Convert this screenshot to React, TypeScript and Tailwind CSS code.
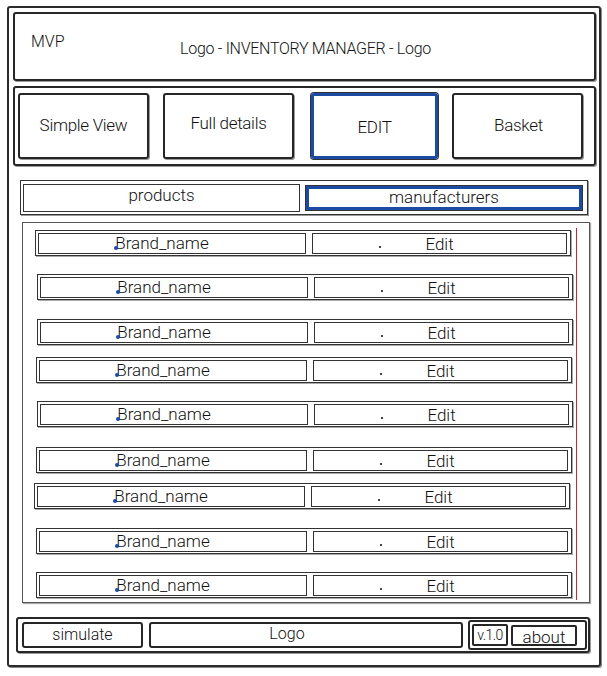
import React from 'react';

const font = { fontFamily: 'Roboto, "Open Sans", sans-serif' };

// row offsets inside the list box, uneven like the sketch
const rows = [
  { mt: 'mt-[7px]', ml: 'ml-[12px]' },
  { mt: 'mt-[18px]', ml: 'ml-[14px]' },
  { mt: 'mt-[19px]', ml: 'ml-[14px]' },
  { mt: 'mt-[12px]', ml: 'ml-[13px]' },
  { mt: 'mt-[18px]', ml: 'ml-[14px]' },
  { mt: 'mt-[20px]', ml: 'ml-[13px]' },
  { mt: 'mt-[10px]', ml: 'ml-[11px]' },
  { mt: 'mt-[19px]', ml: 'ml-[13px]' },
  { mt: 'mt-[18px]', ml: 'ml-[13px]' },
];

const NavButton: React.FC<{ label: string; active?: boolean; width: string; textClass?: string }> = ({ label, active, width, textClass }) => (
  <div
    className={
      'h-[66px] flex items-center justify-center rounded-[3px] ' +
      width +
      (active
        ? ' border-[3px] border-[#1d4aa3] shadow-[0_0_0_1px_#333]'
        : ' border-2 border-[#262626] shadow-[1px_1px_0_#9a9a9a]')
    }
  >
    <span className={'text-[17px] font-light text-[#111] tracking-[-0.3px] ' + (textClass ?? '')}>{label}</span>
  </div>
);

const BrandRow: React.FC<{ mt: string; ml: string }> = ({ mt, ml }) => (
  <div className={'flex w-[536px] h-[26px] items-center gap-[6px] border border-[#333] shadow-[1px_1px_0_#aaa] px-[2px] ' + mt + ' ' + ml}>
    <div className="relative w-[268px] h-[21px] border-[1.5px] border-[#333] flex items-center justify-center">
      <span className="relative text-[17px] font-light text-[#111] leading-none mr-[20px]">
        <span className="absolute left-[-1px] bottom-[2px] w-[4px] h-[4px] rounded-full bg-[#1d4aa3]" />
        Brand_name
      </span>
    </div>
    <div className="relative w-[255px] h-[21px] border-[1.5px] border-[#333] flex items-center justify-center">
      <span className="absolute left-[66px] top-[12px] w-[2px] h-[2px] bg-[#444]" />
      <span className="text-[17px] font-light text-[#111] leading-none pt-[3px]">Edit</span>
    </div>
  </div>
);

export default function App() {
  return (
    <div className="w-[607px] h-[676px] bg-white pt-[6px] pl-[7px]" style={font}>
      <div className="w-[594px] h-[661px] border-2 border-[#2b2b2b] rounded-[3px] p-[4px] shadow-[1px_1px_0_#888]">
        {/* Header */}
        <div className="relative w-[583px] h-[69px] border-2 border-[#262626] rounded-[3px] shadow-[1px_1px_0_#999]">
          <span className="absolute left-[16px] top-[16px] text-[16px] font-light text-[#111]">MVP</span>
          <div className="h-full flex items-center justify-center pt-[4px] pl-[2px]">
            <span className="text-[16px] font-light text-[#111] tracking-[-0.3px]">Logo - INVENTORY MANAGER - Logo</span>
          </div>
        </div>

        {/* Nav */}
        <div className="mt-[5px] w-[583px] h-[80px] border-2 border-[#262626] rounded-[3px] shadow-[1px_1px_0_#999] flex items-center pl-[3px] gap-[14px]">
          <NavButton label="Simple View" width="w-[131px]" />
          <NavButton label="Full details" width="w-[131px]" textClass="-mt-[4px]" />
          <div className="ml-[3px]">
            <NavButton label="EDIT" width="w-[127px]" active textClass="mt-[3px]" />
          </div>
          <NavButton label="Basket" width="w-[131px]" textClass="ml-[2px]" />
        </div>

        {/* Tabs */}
        <div className="mt-[14px] ml-[7px] w-[568px] h-[35px] border-[1.5px] border-[#333] shadow-[1px_1px_0_#999] flex items-center pl-[2px] gap-[6px]">
          <div className="w-[277px] h-[28px] border-[1.5px] border-[#333] flex items-center justify-center">
            <span className="text-[17px] font-light text-[#111] -mt-[4px]">products</span>
          </div>
          <div className="w-[276px] h-[24px] border-[3px] border-[#1d4aa3] shadow-[0_0_0_1px_#333] flex items-center justify-center">
            <span className="text-[17px] font-light text-[#111]">manufacturers</span>
          </div>
        </div>

        {/* List */}
        <div className="relative mt-[7px] ml-[9px] w-[568px] h-[381px] border border-[#555] shadow-[1px_1px_1px_#aaa]">
          <div className="absolute right-[12px] top-[5px] w-[1.5px] h-[372px] bg-[#d3202e]" />
          {rows.map((r, i) => (
            <BrandRow key={i} mt={r.mt} ml={r.ml} />
          ))}
        </div>

        {/* Footer */}
        <div className="mt-[14px] ml-[3px] w-[574px] h-[36px] border-2 border-[#262626] rounded-[3px] shadow-[1px_1px_0_#999] flex items-center pl-[4px] gap-[6px]">
          <div className="w-[121px] h-[26px] border-2 border-[#262626] rounded-[3px] flex items-center justify-center">
            <span className="text-[16px] font-light text-[#111]">simulate</span>
          </div>
          <div className="w-[314px] h-[26px] border-2 border-[#262626] rounded-[3px] flex items-center justify-center">
            <span className="text-[16px] font-light text-[#111] -mt-[3px] mr-[38px]">Logo</span>
          </div>
          <div className="ml-[-1px] w-[119px] h-[30px] border-2 border-[#262626] rounded-[3px] flex items-center pl-[2px] gap-[3px]">
            <div className="w-[36px] h-[22px] border-2 border-[#262626] rounded-[2px] flex items-center justify-center">
              <span className="text-[14px] font-light text-[#111] tracking-[-0.5px]">v.1.0</span>
            </div>
            <div className="w-[66px] h-[21px] border-2 border-[#262626] rounded-[2px] flex items-center justify-center overflow-hidden">
              <span className="text-[17px] font-light text-[#111] mt-[5px]">about</span>
            </div>
          </div>
        </div>
      </div>
    </div>
  );
}
